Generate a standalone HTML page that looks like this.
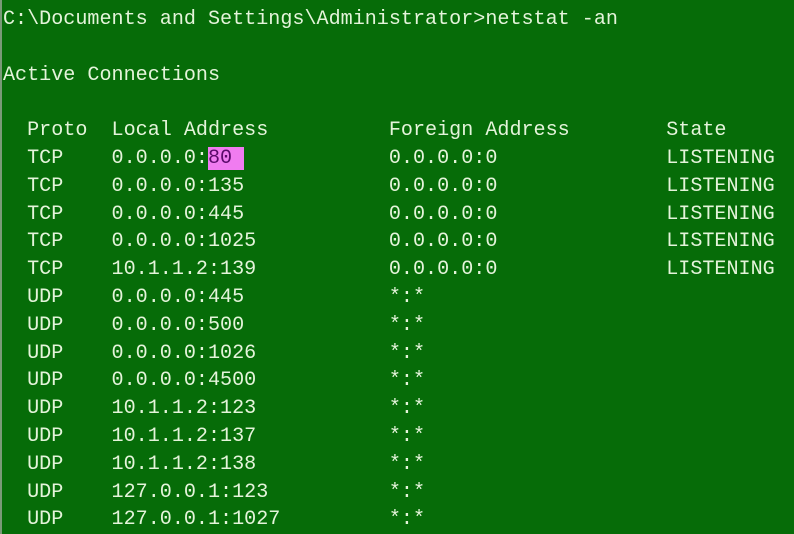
<!DOCTYPE html>
<html><head><meta charset="utf-8"><style>
html,body{margin:0;padding:0;}
body{width:794px;height:534px;overflow:hidden;background:#066c08;position:relative;}
.edge{position:absolute;left:0;top:0;width:2px;height:534px;background:#7a9a78;}
pre{position:absolute;left:3px;top:6px;margin:0;font-family:"Liberation Mono",monospace;font-size:20.1px;line-height:27.8px;color:#e4f4da;white-space:pre;}
.hl{background:#f07cf0;color:#5a0a6a;}
</style></head><body><div class="edge"></div>
<pre>C:\Documents and Settings\Administrator&gt;netstat -an

Active Connections

  Proto  Local Address          Foreign Address        State
  TCP    0.0.0.0:<span class="hl">80 </span>            0.0.0.0:0              LISTENING
  TCP    0.0.0.0:135            0.0.0.0:0              LISTENING
  TCP    0.0.0.0:445            0.0.0.0:0              LISTENING
  TCP    0.0.0.0:1025           0.0.0.0:0              LISTENING
  TCP    10.1.1.2:139           0.0.0.0:0              LISTENING
  UDP    0.0.0.0:445            *:*
  UDP    0.0.0.0:500            *:*
  UDP    0.0.0.0:1026           *:*
  UDP    0.0.0.0:4500           *:*
  UDP    10.1.1.2:123           *:*
  UDP    10.1.1.2:137           *:*
  UDP    10.1.1.2:138           *:*
  UDP    127.0.0.1:123          *:*
  UDP    127.0.0.1:1027         *:*</pre>
</body></html>
